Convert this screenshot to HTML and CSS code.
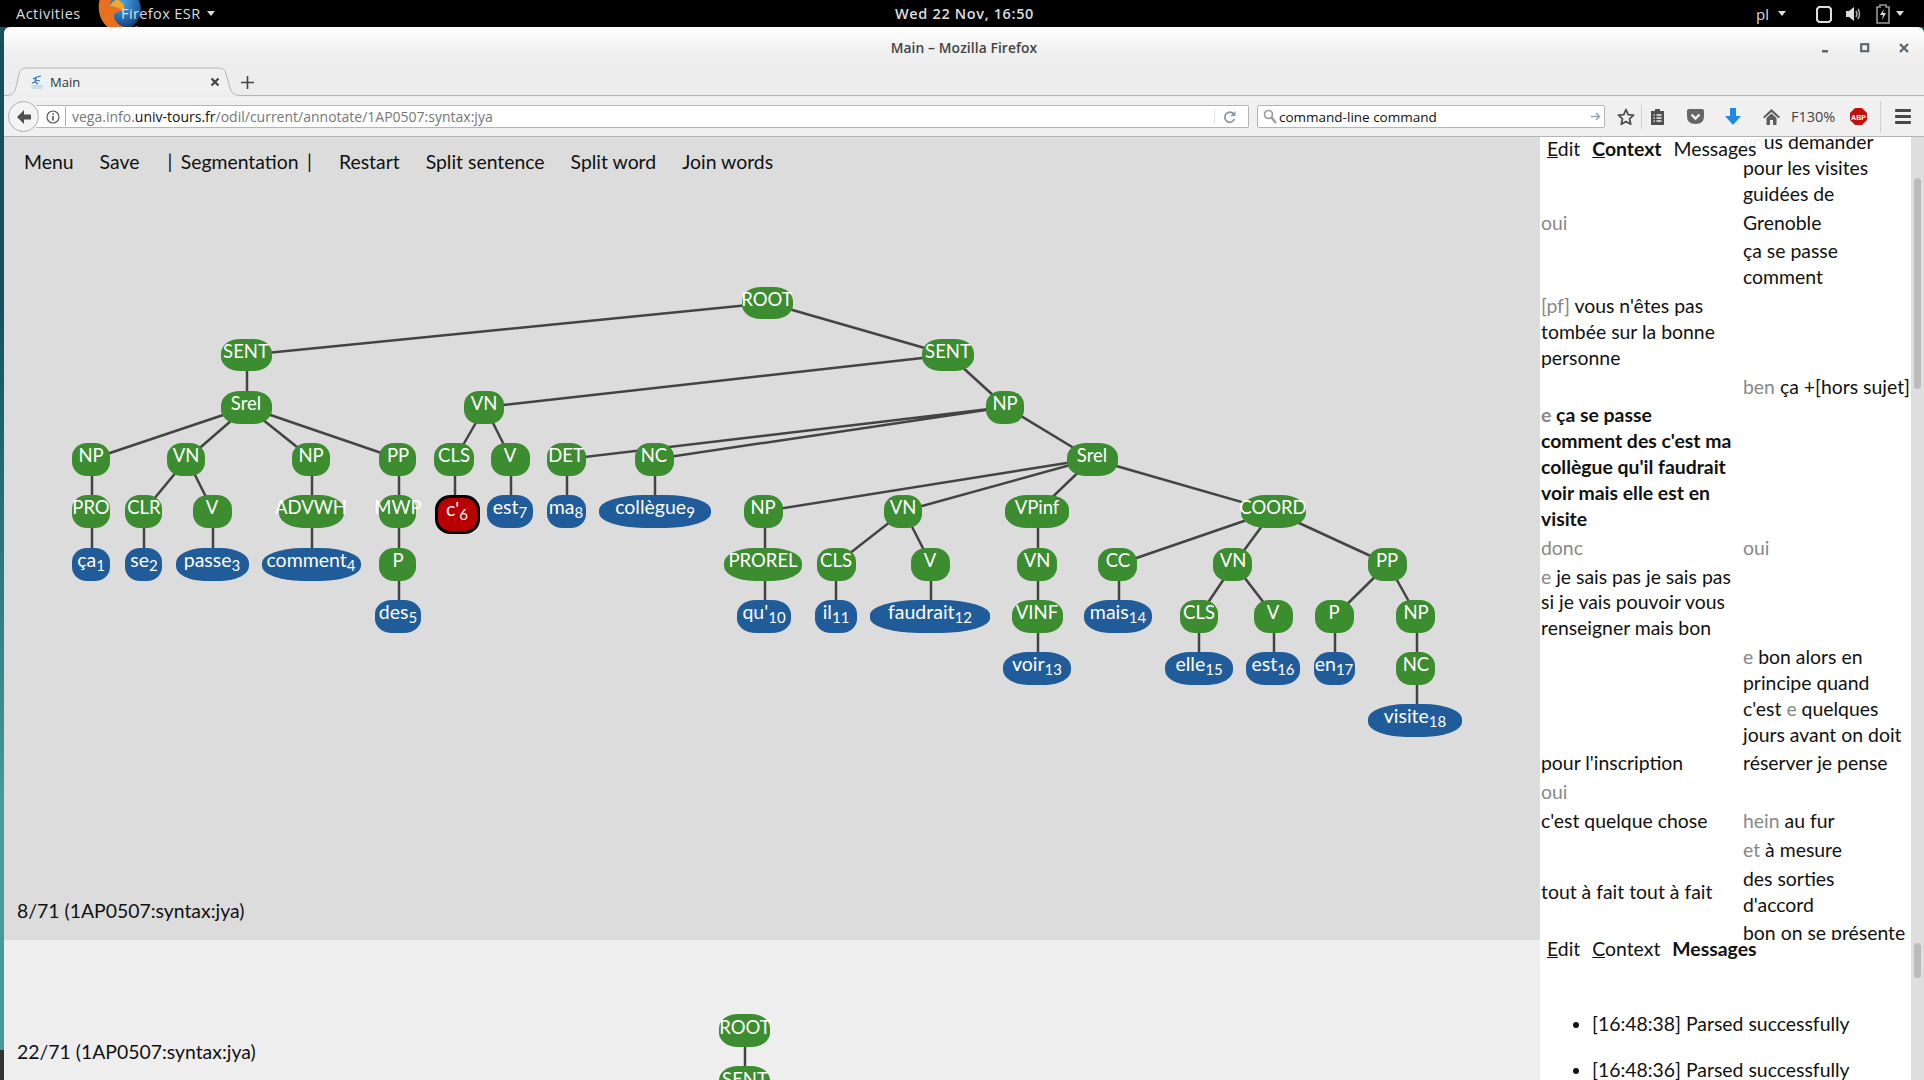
FILE: index.html
```html
<!DOCTYPE html>
<html lang="en">
  <head>
    <meta charset="UTF-8" />
    <title>Main - Mozilla Firefox</title>
    <link rel="stylesheet" href="styles.css">
  </head>

  <body>
    <div class="topbar">
      <span class="activities">Activities</span>
      <svg class="fx-logo" width="44" height="44" viewBox="0 0 40 40">
        <defs>
          <radialGradient id="fxglobe" cx="0.55" cy="0.35" r="0.7">
            <stop offset="0" stop-color="#4aa3e0" />
            <stop offset="0.65" stop-color="#1f5a9c" />
            <stop offset="1" stop-color="#0c2240" />
          </radialGradient>
        </defs>
        <circle cx="20" cy="16" r="19" fill="url(#fxglobe)" />
        <path d="M6 -3C-2 8 -1 24 9 32C18 39 31 38 37 30C29 35 18 32 15 24C13 19 18 17 23 18C19 13 13 14 11 12C11 8 14 4 17 2C12 2 8 0 6 -3Z" fill="#e8701f" />
        <path d="M11 12C13 14 19 13 23 18C25 16 24 11 20 8C17 6 13 8 11 12Z" fill="#f4a52c" />
      </svg>
      <span class="app-name">Firefox ESR</span>
      <span class="caret"></span>
      <span class="clock">Wed 22 Nov, 16:50</span>
      <span class="lang">pl</span>
      <span class="caret lang-caret"></span>
      <svg class="tray-icon first" width="16" height="18" viewBox="0 0 16 18"><path d="M3 2H13L15 4V15L13 17H3L1 15V4Z" fill="none" stroke="#ddd" stroke-width="2" /></svg>
      <svg class="tray-icon" width="18" height="18" viewBox="0 0 18 18"><path d="M1 6H4L9 2V16L4 12H1Z" fill="#ddd" /><path d="M11 6Q13 9 11 12M13 4Q16 9 13 14" fill="none" stroke="#aaa" stroke-width="1.5" /></svg>
      <svg class="tray-icon" width="14" height="20" viewBox="0 0 14 20"><path d="M4 1H10V3H13V19H1V3H4Z" fill="none" stroke="#999" stroke-width="1.6" /><path d="M8 5L4 11H7L6 16L10 9H7Z" fill="#ddd" /></svg>
      <span class="caret last"></span>
    </div>

    <div class="window">
      <div class="titlebar">
        <span class="title">Main &#8211; Mozilla Firefox</span>
        <div class="win-buttons">
          <svg width="10" height="10" viewBox="0 0 10 10"><rect x="1" y="7" width="6" height="2.5" fill="#5b6870" /></svg>
          <svg width="10" height="10" viewBox="0 0 10 10"><rect x="1.2" y="1.2" width="7" height="7" fill="none" stroke="#5b6870" stroke-width="2.2" /></svg>
          <svg width="10" height="10" viewBox="0 0 10 10"><path d="M1 1L9 9M9 1L1 9" stroke="#5b6870" stroke-width="2.4" /></svg>
        </div>
      </div>

      <div class="tabbar">
        <svg class="tab-outline" width="1920" height="30" viewBox="0 0 1920 30">
          <path d="M0 28.5C8 28.5 10 27 12 20L15 7C16 3 18 1 22 1H214C219 1 221 3 222 7L226 21C228 27 231 28.5 237 28.5H1920" fill="#f0f0f0" stroke="#b4b4b4" stroke-width="1" />
        </svg>
        <svg class="favicon" width="16" height="16" viewBox="0 0 16 16">
          <rect width="16" height="16" fill="#eaf2f8" />
          <path d="M4 5L8 3L12 2M7 4L6 8M6 6L11 7M6 8L3 9M6 8L9 10" fill="none" stroke="#2a70b8" stroke-width="1.2" />
          <path d="M2 12H14M3 14H13" stroke="#a9c6de" stroke-width="1" />
        </svg>
        <span class="tab-title">Main</span>
        <svg class="tab-close" width="10" height="10" viewBox="0 0 10 10"><path d="M1.5 1.5L8.5 8.5M8.5 1.5L1.5 8.5" stroke="#444" stroke-width="2.2" /></svg>
        <svg class="tab-new" width="13" height="13" viewBox="0 0 13 13"><path d="M6.5 0V13M0 6.5H13" stroke="#444" stroke-width="1.6" /></svg>
      </div>

      <div class="navbar">
        <div class="back">
          <svg width="18" height="18" viewBox="0 0 18 18"><path d="M9 2L2 9L9 16V11.5H16V6.5H9Z" fill="#505050" /></svg>
        </div>
        <div class="urlbar">
          <svg class="info" width="14" height="14" viewBox="0 0 14 14">
            <circle cx="7" cy="7" r="6" fill="none" stroke="#555" stroke-width="1.2" />
            <path d="M7 6V10.5M7 3.2V4.8" stroke="#555" stroke-width="1.6" />
          </svg>
          <span class="url"><span class="dim">vega.info.</span>univ-tours.fr<span class="dim">/odil/current/annotate/1AP0507:syntax:jya</span></span>
          <svg class="reload" width="14" height="14" viewBox="0 0 14 14"><path d="M11.5 9A5 5 0 1 1 11 4.5" fill="none" stroke="#8a9aa8" stroke-width="1.8" /><path d="M12.5 1V6H7.5Z" fill="#8a9aa8" /></svg>
        </div>
        <div class="searchbar">
          <svg width="14" height="15" viewBox="0 0 14 15"><circle cx="5.5" cy="5.5" r="4" fill="none" stroke="#999" stroke-width="1.7" /><path d="M8.5 8.5L13 14" stroke="#999" stroke-width="2.2" /></svg>
          <span class="search-text">command-line command</span>
          <svg width="11" height="11" viewBox="0 0 11 11"><path d="M1 5.5H9M6 2L9.5 5.5L6 9" fill="none" stroke="#9aa6b0" stroke-width="1.6" /></svg>
        </div>
        <div class="tools">
          <svg class="star" width="18" height="18" viewBox="0 0 18 18"><path d="M9 1.5L11.2 6.6L16.6 7.1L12.5 10.8L13.7 16.2L9 13.4L4.3 16.2L5.5 10.8L1.4 7.1L6.8 6.6Z" fill="none" stroke="#505050" stroke-width="1.8" stroke-linejoin="round" /></svg>
          <span class="tool-sep"></span>
          <svg class="clip" width="15" height="18" viewBox="0 0 15 18"><path d="M1 3H5V1H10V3H14V17H1Z" fill="#505050" /><path d="M3.5 7H4.8M6.5 7H11.5M3.5 10H4.8M6.5 10H11.5M3.5 13H4.8M6.5 13H11.5" stroke="#f0f0f0" stroke-width="1.3" /></svg>
          <svg class="pocket" width="17" height="16" viewBox="0 0 17 16"><path d="M2 0H15Q17 0 17 2V7Q17 15 8.5 15Q0 15 0 7V2Q0 0 2 0Z" fill="#666" /><path d="M4.5 5.5L8.5 9.5L12.5 5.5" fill="none" stroke="#f0f0f0" stroke-width="2.4" /></svg>
          <svg class="download" width="16" height="17" viewBox="0 0 16 17"><path d="M5 0H11V8H16L8 17L0 8H5Z" fill="#1e8ae6" /></svg>
          <svg class="home" width="17" height="16" viewBox="0 0 17 16"><path d="M8.5 0L17 8L15.5 9.2L8.5 3L1.5 9.2L0 8ZM3.5 9L8.5 4.6L13.5 9V16H10V11H7V16H3.5Z" fill="#5a5f5a" /></svg>
          <span class="zoom-level">F130%</span>
          <svg class="abp" width="17" height="17" viewBox="0 0 17 17">
            <path d="M5 0H12L17 5V12L12 17H5L0 12V5Z" fill="#c70d0d" />
            <text x="8.5" y="11.5" class="abp-text">ABP</text>
          </svg>
          <span class="tool-sep wide"></span>
          <div class="hamburger"><span></span><span></span><span></span></div>
        </div>
      </div>

      <div class="content">
        <div class="main">
          <div class="pane current">
            <div class="menu">
              <a class="item">Menu</a>
              <a class="item">Save</a>
              <a class="item seg">| Segmentation |</a>
              <a class="item">Restart</a>
              <a class="item">Split sentence</a>
              <a class="item">Split word</a>
              <a class="item">Join words</a>
            </div>

            <svg class="tree" width="1536" height="470" viewBox="4 280 1536 470">
              <path class="edges" d="M768 302L247 354M768 302L949 354M247 354V406M247 406L92 458M247 406L187 458M247 406L312 458M247 406L399 458M92 458V563M187 458L144 510V563M187 458L213 510V563M312 458V563M399 458V615M949 354L485 406M949 354L1006 406M485 406L455 458V510M485 406L511 458V510M1006 406L567 458V510M1006 406L655 458V510M1006 406L1092 458M1092 458L765 510V615M1092 458L904 510M904 510L836 563V615M904 510L931 563V615M1092 458L1038 510V667M1092 458L1273 510M1273 510L1119 563V615M1273 510L1234 563M1234 563L1199 615V667M1234 563L1274 615V667M1273 510L1388 563M1388 563L1335 615V667M1388 563L1417 615V719" />

              <g class="cat">
                <rect x="742" y="286" width="51" height="32" rx="19" ry="14" /><text x="767" y="305">ROOT</text>
                <rect x="221" y="338" width="51" height="32" rx="19" ry="14" /><text x="246" y="357">SENT</text>
                <rect x="922" y="338" width="52" height="32" rx="19" ry="14" /><text x="948" y="357">SENT</text>
                <rect x="221" y="390" width="51" height="33" rx="19" ry="14" /><text x="246" y="409">Srel</text>
                <rect x="464" y="390" width="40" height="33" rx="15" ry="14" /><text x="484" y="409">VN</text>
                <rect x="986" y="390" width="38" height="33" rx="15" ry="14" /><text x="1005" y="409">NP</text>

                <rect x="72" y="442" width="38" height="33" rx="15" ry="14" /><text x="91" y="461">NP</text>
                <rect x="167" y="442" width="38" height="33" rx="15" ry="14" /><text x="186" y="461">VN</text>
                <rect x="292" y="442" width="38" height="33" rx="15" ry="14" /><text x="311" y="461">NP</text>
                <rect x="379" y="442" width="37" height="33" rx="15" ry="14" /><text x="398" y="461">PP</text>
                <rect x="434" y="442" width="40" height="33" rx="15" ry="14" /><text x="454" y="461">CLS</text>
                <rect x="491" y="442" width="39" height="33" rx="15" ry="14" /><text x="510" y="461">V</text>
                <rect x="547" y="442" width="39" height="33" rx="15" ry="14" /><text x="566" y="461">DET</text>
                <rect x="635" y="442" width="39" height="33" rx="15" ry="14" /><text x="654" y="461">NC</text>
                <rect x="1067" y="442" width="51" height="33" rx="19" ry="14" /><text x="1092" y="461">Srel</text>

                <rect x="72" y="494" width="38" height="33" rx="15" ry="14" /><text x="91" y="513">PRO</text>
                <rect x="125" y="494" width="37" height="33" rx="15" ry="14" /><text x="144" y="513">CLR</text>
                <rect x="193" y="494" width="39" height="33" rx="15" ry="14" /><text x="212" y="513">V</text>
                <rect x="279" y="494" width="65" height="33" rx="24" ry="15" /><text x="311" y="513">ADVWH</text>
                <rect x="379" y="494" width="37" height="33" rx="15" ry="14" /><text x="398" y="513">MWP</text>
                <rect x="744" y="494" width="39" height="33" rx="15" ry="14" /><text x="763" y="513">NP</text>
                <rect x="884" y="494" width="38" height="33" rx="15" ry="14" /><text x="903" y="513">VN</text>
                <rect x="1005" y="494" width="64" height="33" rx="22" ry="14" /><text x="1037" y="513">VPinf</text>
                <rect x="1241" y="494" width="65" height="33" rx="24" ry="15" /><text x="1273" y="513">COORD</text>

                <rect x="379" y="547" width="37" height="33" rx="15" ry="14" /><text x="398" y="566">P</text>
                <rect x="724" y="547" width="78" height="33" rx="30" ry="15" /><text x="763" y="566">PROREL</text>
                <rect x="817" y="547" width="39" height="33" rx="15" ry="14" /><text x="836" y="566">CLS</text>
                <rect x="911" y="547" width="39" height="33" rx="15" ry="14" /><text x="930" y="566">V</text>
                <rect x="1017" y="547" width="40" height="33" rx="15" ry="14" /><text x="1037" y="566">VN</text>
                <rect x="1098" y="547" width="39" height="33" rx="15" ry="14" /><text x="1118" y="566">CC</text>
                <rect x="1213" y="547" width="39" height="33" rx="15" ry="14" /><text x="1233" y="566">VN</text>
                <rect x="1368" y="547" width="39" height="33" rx="15" ry="14" /><text x="1387" y="566">PP</text>

                <rect x="1012" y="599" width="51" height="33" rx="19" ry="14" /><text x="1037" y="618">VINF</text>
                <rect x="1180" y="599" width="38" height="33" rx="15" ry="14" /><text x="1199" y="618">CLS</text>
                <rect x="1254" y="599" width="39" height="33" rx="15" ry="14" /><text x="1273" y="618">V</text>
                <rect x="1315" y="599" width="39" height="33" rx="15" ry="14" /><text x="1334" y="618">P</text>
                <rect x="1396" y="599" width="39" height="33" rx="15" ry="14" /><text x="1416" y="618">NP</text>
                <rect x="1396" y="651" width="39" height="33" rx="15" ry="14" /><text x="1416" y="670">NC</text>
              </g>

              <g class="word">
                <rect x="487" y="494" width="46" height="33" rx="17" ry="14" /><text x="510" y="513">est<tspan class="idx" dy="4">7</tspan></text>
                <rect x="547" y="494" width="39" height="33" rx="15" ry="14" /><text x="566" y="513">ma<tspan class="idx" dy="4">8</tspan></text>
                <rect x="599" y="494" width="112" height="33" rx="45" ry="15" /><text x="655" y="513">collègue<tspan class="idx" dy="4">9</tspan></text>
                <rect x="72" y="547" width="38" height="33" rx="15" ry="14" /><text x="91" y="566">ça<tspan class="idx" dy="4">1</tspan></text>
                <rect x="125" y="547" width="37" height="33" rx="15" ry="14" /><text x="144" y="566">se<tspan class="idx" dy="4">2</tspan></text>
                <rect x="176" y="547" width="73" height="33" rx="28" ry="15" /><text x="212" y="566">passe<tspan class="idx" dy="4">3</tspan></text>
                <rect x="262" y="547" width="99" height="33" rx="40" ry="15" /><text x="311" y="566">comment<tspan class="idx" dy="4">4</tspan></text>
                <rect x="375" y="599" width="46" height="33" rx="17" ry="14" /><text x="398" y="618">des<tspan class="idx" dy="4">5</tspan></text>
                <rect x="737" y="599" width="54" height="33" rx="19" ry="14" /><text x="764" y="618">qu'<tspan class="idx" dy="4">10</tspan></text>
                <rect x="815" y="599" width="42" height="33" rx="16" ry="14" /><text x="836" y="618">il<tspan class="idx" dy="4">11</tspan></text>
                <rect x="870" y="599" width="120" height="33" rx="48" ry="15" /><text x="930" y="618">faudrait<tspan class="idx" dy="4">12</tspan></text>
                <rect x="1084" y="599" width="68" height="33" rx="25" ry="15" /><text x="1118" y="618">mais<tspan class="idx" dy="4">14</tspan></text>
                <rect x="1003" y="651" width="68" height="33" rx="25" ry="15" /><text x="1037" y="670">voir<tspan class="idx" dy="4">13</tspan></text>
                <rect x="1165" y="651" width="68" height="33" rx="25" ry="15" /><text x="1199" y="670">elle<tspan class="idx" dy="4">15</tspan></text>
                <rect x="1246" y="651" width="54" height="33" rx="19" ry="14" /><text x="1273" y="670">est<tspan class="idx" dy="4">16</tspan></text>
                <rect x="1314" y="651" width="41" height="33" rx="16" ry="14" /><text x="1334" y="670">en<tspan class="idx" dy="4">17</tspan></text>
                <rect x="1368" y="703" width="94" height="33" rx="38" ry="15" /><text x="1415" y="722">visite<tspan class="idx" dy="4">18</tspan></text>
              </g>

              <g class="selected">
                <rect x="436.500" y="495.500" width="42" height="36" rx="14" ry="13" /><text x="457" y="515">c'<tspan class="idx" dy="4">6</tspan></text>
              </g>
            </svg>

            <div class="status">8/71 (1AP0507:syntax:jya)</div>
          </div>

          <div class="pane next">
            <svg class="tree-next" width="1536" height="80" viewBox="4 1000 1536 80">
              <path class="edges" d="M745 1030V1080" />
              <g class="cat">
                <rect x="719" y="1014" width="51" height="33" rx="19" ry="14" /><text x="745" y="1034">ROOT</text>
                <rect x="719" y="1066" width="51" height="33" rx="19" ry="14" /><text x="745" y="1086">SENT</text>
              </g>
            </svg>
            <div class="status">22/71 (1AP0507:syntax:jya)</div>
          </div>
        </div>

        <div class="side">
          <div class="panel context">
            <div class="tabs overlay">
              <span class="tab-link"><u>E</u>dit</span>
              <span class="tab-link active"><u>C</u>ontext</span>
              <span class="tab-link">Messages</span>
            </div>
            <table class="transcript">
              <tr><td></td><td><span class="filler">vo</span>us demander<br>pour les visites<br>guidées de</td></tr>
              <tr><td class="filler">oui</td><td>Grenoble</td></tr>
              <tr><td></td><td>ça se passe<br>comment</td></tr>
              <tr><td><span class="filler">[pf]</span> vous n'êtes pas<br>tombée sur la bonne<br>personne</td><td></td></tr>
              <tr><td></td><td><span class="filler">ben</span> ça +[hors sujet]</td></tr>
              <tr class="current-turn"><td><span class="filler">e</span> ça se passe<br>comment des c'est ma<br>collègue qu'il faudrait<br>voir mais elle est en<br>visite</td><td></td></tr>
              <tr><td class="filler">donc</td><td class="filler">oui</td></tr>
              <tr><td><span class="filler">e</span> je sais pas je sais pas<br>si je vais pouvoir vous<br>renseigner mais bon</td><td></td></tr>
              <tr><td></td><td><span class="filler">e</span> bon alors en<br>principe quand<br>c'est <span class="filler">e</span> quelques<br>jours avant on doit</td></tr>
              <tr><td>pour l'inscription</td><td>réserver je pense</td></tr>
              <tr><td class="filler">oui</td><td></td></tr>
              <tr><td>c'est quelque chose</td><td><span class="filler">hein</span> au fur</td></tr>
              <tr><td></td><td><span class="filler">et</span> à mesure</td></tr>
              <tr><td>tout à fait tout à fait</td><td>des sorties<br>d'accord</td></tr>
              <tr><td></td><td>bon on se présente</td></tr>
            </table>
          </div>

          <div class="panel messages">
            <div class="tabs">
              <span class="tab-link"><u>E</u>dit</span>
              <span class="tab-link"><u>C</u>ontext</span>
              <span class="tab-link active">Messages</span>
            </div>
            <ul class="log">
              <li>[16:48:38] Parsed successfully</li>
              <li>[16:48:36] Parsed successfully</li>
            </ul>
          </div>
        </div>

        <div class="gutter">
          <div class="thumb one"></div>
          <div class="thumb two"></div>
        </div>
      </div>
    </div>
  </body>
</html>
```

FILE: styles.css
```css
html,
body {
  margin: 0;
  height: 1080px;
  overflow: hidden;
}

body {
  font-family: "Open Sans", sans-serif;
  background: linear-gradient(#14505f 0, #14505f 300px, #459a9b 800px, #459a9b 1050px, #333 1050px);
}

/* desktop bar */
.topbar {
  height: 27px;
  background: #000;
  color: #ddd;
  display: flex;
  align-items: center;
  font-size: 14.500px;
  overflow: hidden;
  position: relative;
  padding-left: 16px;
}

.activities {
  width: 82px;
  flex: none;
  letter-spacing: 0.5px;
}

.fx-logo {
  margin-right: -21px;
  align-self: flex-start;
  flex: none;
  margin-top: -8px;
}

.app-name {
  position: relative;
  letter-spacing: 0.4px;
}

.caret {
  width: 0;
  height: 0;
  border-left: 4px solid transparent;
  border-right: 4px solid transparent;
  border-top: 5px solid #ddd;
  margin-left: 6px;
  position: relative;
}

.caret.lang-caret {
  margin-left: 9px;
}

.caret.last {
  margin-left: 6px;
  margin-right: 20px;
}

.clock {
  position: absolute;
  left: 895px;
  font-weight: 600;
  letter-spacing: 0.65px;
}

.lang {
  margin-left: auto;
  font-size: 15px;
}

.tray-icon {
  margin-left: 13px;
}

.tray-icon.first {
  margin-left: 30px;
}

/* firefox window */
.window {
  margin-left: 4px;
  height: 1053px;
  display: flex;
  flex-direction: column;
  border-top-left-radius: 6px;
  border-top-right-radius: 6px;
  overflow: hidden;
}

.titlebar {
  height: 40px;
  background: linear-gradient(#fff, #f0f0f0 60%, #ededed);
  display: flex;
  align-items: center;
  justify-content: center;
  position: relative;
}

.title {
  font-size: 13.800px;
  color: #444;
  font-weight: 600;
  letter-spacing: 0.1px;
}

.win-buttons {
  position: absolute;
  right: 15px;
  top: 16px;
  display: flex;
  gap: 29px;
}

.tabbar {
  height: 30px;
  background: #ededed;
  position: relative;
  display: flex;
  align-items: center;
  flex: none;
}

.tab-outline {
  position: absolute;
  left: 0;
  top: 0;
}

.favicon {
  position: relative;
  margin-left: 25px;
}

.tab-title {
  position: relative;
  font-size: 13px;
  color: #333;
  margin-left: 5px;
  width: 160px;
}

.tab-close {
  position: relative;
}

.tab-new {
  position: relative;
  margin-left: 21px;
}

.navbar {
  height: 39px;
  background: #f0f0f0;
  border-bottom: 1px solid #b4b4b4;
  display: flex;
  align-items: center;
  position: relative;
  flex: none;
}

.back {
  width: 31px;
  height: 31px;
  box-sizing: border-box;
  border-radius: 50%;
  border: 1px solid #b0b0b0;
  background: #f4f4f4;
  display: flex;
  align-items: center;
  justify-content: center;
  margin-left: 4px;
  position: relative;
  z-index: 1;
}

.urlbar {
  width: 1213px;
  height: 23px;
  margin-left: -3px;
  box-sizing: border-box;
  border: 1px solid #b4b4b4;
  border-left: 0;
  border-radius: 0 2px 2px 0;
  background: #fff;
  display: flex;
  align-items: center;
  font-size: 14px;
}

.info {
  margin-left: 10px;
  flex: none;
}

.url {
  margin-left: 5px;
  padding-left: 6px;
  border-left: 1px solid #aaa;
  color: #111;
  flex: 1;
  white-space: nowrap;
}

.dim {
  color: #777;
}

.reload {
  margin-right: 11px;
  padding-left: 8px;
  border-left: 1px solid #ddd;
}

.searchbar {
  width: 348px;
  height: 23px;
  margin-left: 8px;
  box-sizing: border-box;
  border: 1px solid #b4b4b4;
  border-radius: 2px;
  background: #fff;
  display: flex;
  align-items: center;
  padding: 0 3px 0 5px;
  font-size: 13.500px;
  color: #111;
}

.search-text {
  flex: 1;
  margin-left: 2px;
}

.tools {
  flex: 1;
  display: flex;
  align-items: center;
  position: relative;
  height: 30px;
  margin-left: 12px;
}

.tool-sep {
  width: 1px;
  height: 24px;
  background: #d0d0d0;
  margin-left: 6px;
}

.tool-sep.wide {
  height: 32px;
  margin-left: 13px;
}

.clip {
  margin-left: 8px;
}

.pocket {
  margin-left: 22px;
}

.download {
  margin-left: 21px;
}

.home {
  margin-left: 22px;
}

.zoom-level {
  font-size: 14.500px;
  color: #444;
  margin-left: 11px;
}

.abp {
  margin-left: 15px;
}

.abp-text {
  font-family: "Liberation Sans", sans-serif;
  font-size: 7px;
  font-weight: bold;
  fill: #fff;
  text-anchor: middle;
}

.hamburger {
  margin-left: 14px;
  display: flex;
  flex-direction: column;
  gap: 3px;
}

.hamburger span {
  display: block;
  width: 16px;
  height: 3px;
  border-radius: 1px;
  background: #484848;
}

/* page */
.content {
  flex: 1;
  min-height: 0;
  display: flex;
  font-family: Lato, sans-serif;
  font-size: 19.400px;
  color: #111;
}

.main {
  width: 1536px;
  display: flex;
  flex-direction: column;
}

.pane.current {
  height: 803px;
  background: #dcdcdc;
  display: flex;
  flex-direction: column;
}

.menu {
  height: 48px;
  display: flex;
  align-items: center;
  padding-left: 20px;
  gap: 26px;
  margin-bottom: 96px;
}

.item.seg {
  margin-left: 2px;
  margin-right: 1px;
  word-spacing: 3.500px;
}

.status {
  margin-top: auto;
  padding-left: 13px;
  line-height: 26px;
  padding-bottom: 16px;
}

.pane.next .status {
  padding-bottom: 15px;
}

.tree,
.tree-next {
  display: block;
  flex: none;
}

.edges {
  fill: none;
  stroke: #444;
  stroke-width: 2.500;
}

.cat rect {
  fill: #3c8d2f;
}

.word rect {
  fill: #1f5c99;
}

.selected rect {
  fill: #b90000;
  stroke: #000;
  stroke-width: 3;
}

.tree text,
.tree-next text {
  fill: #fff;
  font-size: 18.500px;
  text-anchor: middle;
}

.tree .word text,
.tree .selected text {
  font-size: 19.500px;
}

.tree .idx {
  font-size: 15px;
}

.pane.next {
  flex: 1;
  min-height: 0;
  background: #eee;
  display: grid;
  align-items: end;
  overflow: hidden;
}

.pane.next > * {
  grid-area: 1 / 1;
}

.side {
  width: 371px;
  background: #fff;
  display: flex;
  flex-direction: column;
}

.panel {
  position: relative;
  overflow: hidden;
}

.panel.context {
  height: 803px;
}

.panel.messages {
  flex: 1;
  min-height: 0;
}

.tabs {
  display: flex;
  gap: 12px;
  padding-left: 7px;
  height: 24px;
  line-height: 24px;
}

.panel.messages .tabs {
  margin-top: -3px;
}

.tabs.overlay {
  position: absolute;
  left: 0;
  top: 0;
  width: 216px;
  height: 28px;
  background: rgba(255, 255, 255, 0.85);
}

.tab-link.active {
  font-weight: bold;
}

.transcript {
  border-collapse: separate;
  border-spacing: 0 3px;
  margin-top: -11px;
  table-layout: fixed;
  width: 371px;
  line-height: 25.850px;
}

.transcript td {
  padding: 0 0 0 1px;
  width: 201px;
  white-space: nowrap;
  vertical-align: middle;
}

.transcript td:last-child {
  width: 169px;
}

.filler {
  color: #888;
}

.current-turn {
  font-weight: bold;
}

.log {
  margin: 50px 0 0;
  padding-left: 52px;
  line-height: 26px;
}

.log li {
  margin-bottom: 20px;
}

.gutter {
  width: 13px;
  background: #dedede;
  display: flex;
  flex-direction: column;
  align-items: flex-end;
}

.thumb {
  width: 7px;
  margin-right: 3px;
  background: #bbb;
  border-radius: 4px;
}

.thumb.one {
  margin-top: 41px;
  height: 211px;
}

.thumb.two {
  margin-top: 554px;
  height: 35px;
}
```
